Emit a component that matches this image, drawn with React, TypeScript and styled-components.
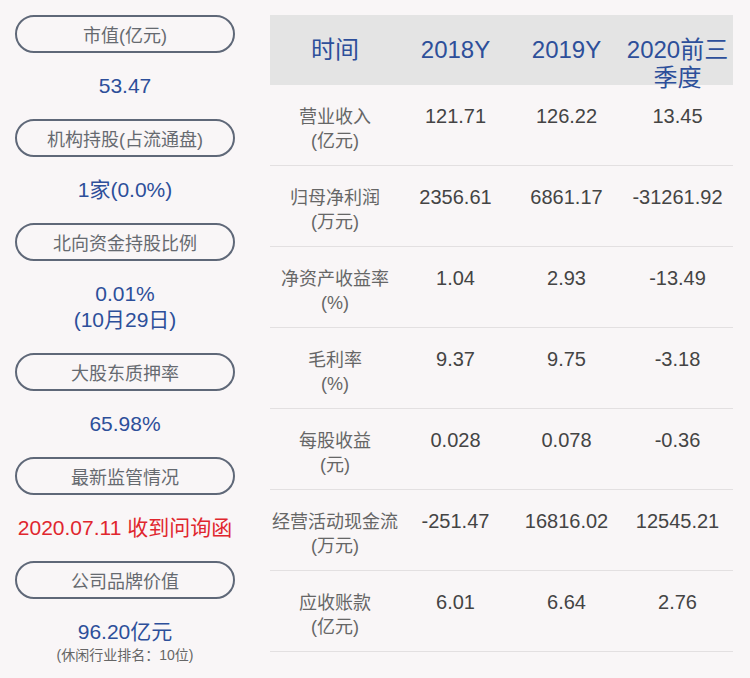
import React from "react";
import styled, { createGlobalStyle } from "styled-components";

const GlobalStyle = createGlobalStyle`
  html, body {
    margin: 0;
    padding: 0;
    background: #f9f6f7;
    font-family: "Liberation Sans", "Noto Sans CJK SC", sans-serif;
  }
`;

const Page = styled.div`
  width: 750px;
  height: 678px;
  box-sizing: border-box;
  padding: 15px 17px 0 15px;
  display: flex;
  gap: 35px;
  align-items: flex-start;
  background: #f9f6f7;
  overflow: hidden;
`;

const LeftColumn = styled.div`
  width: 220px;
  display: flex;
  flex-direction: column;
`;

const Pill = styled.div`
  height: 38px;
  box-sizing: border-box;
  border: 2px solid #5f6878;
  border-radius: 19px;
  display: flex;
  align-items: center;
  justify-content: center;
  font-size: 18px;
  color: #666a70;
`;

const ValueBlock = styled.div`
  padding: 20px 0;
  display: flex;
  flex-direction: column;
  align-items: center;
  text-align: center;
`;

const Value = styled.div<{ $red?: boolean }>`
  font-size: 21px;
  line-height: 26px;
  color: ${(p) => (p.$red ? "#e0262e" : "#2d4f9a")};
  white-space: nowrap;
`;

const SubText = styled.div`
  font-size: 14px;
  line-height: 18px;
  color: #666;
  margin-top: 1px;
`;

const Table = styled.div`
  width: 463px;
  display: flex;
  flex-direction: column;
`;

const HeaderRow = styled.div`
  display: grid;
  grid-template-columns: 130px 111px 111px 111px;
  height: 70px;
  background: #e4e4e4;
`;

const HeaderCell = styled.div`
  padding-top: 21px;
  font-size: 24px;
  line-height: 28px;
  color: #2d4f9a;
  text-align: center;
  white-space: normal;
  word-break: break-all;
  position: relative;
`;

const Row = styled.div`
  display: grid;
  grid-template-columns: 130px 111px 111px 111px;
  height: 81px;
  box-sizing: border-box;
  border-bottom: 1px solid #e3e0e1;
`;

const LabelCell = styled.div`
  padding-top: 20px;
  font-size: 18px;
  line-height: 24px;
  color: #666;
  text-align: center;
  white-space: nowrap;
`;

const NumCell = styled.div`
  padding-top: 19px;
  font-size: 20px;
  line-height: 24px;
  color: #444;
  text-align: center;
  white-space: nowrap;
`;

const leftItems: { title: string; values: string[]; red?: boolean; sub?: string }[] = [
  { title: "市值(亿元)", values: ["53.47"] },
  { title: "机构持股(占流通盘)", values: ["1家(0.0%)"] },
  { title: "北向资金持股比例", values: ["0.01%", "(10月29日)"] },
  { title: "大股东质押率", values: ["65.98%"] },
  { title: "最新监管情况", values: ["2020.07.11 收到问询函"], red: true },
  { title: "公司品牌价值", values: ["96.20亿元"], sub: "(休闲行业排名：10位)" },
];

const rows: { label: string[]; nums: string[] }[] = [
  { label: ["营业收入", "(亿元)"], nums: ["121.71", "126.22", "13.45"] },
  { label: ["归母净利润", "(万元)"], nums: ["2356.61", "6861.17", "-31261.92"] },
  { label: ["净资产收益率", "(%)"], nums: ["1.04", "2.93", "-13.49"] },
  { label: ["毛利率", "(%)"], nums: ["9.37", "9.75", "-3.18"] },
  { label: ["每股收益", "(元)"], nums: ["0.028", "0.078", "-0.36"] },
  { label: ["经营活动现金流", "(万元)"], nums: ["-251.47", "16816.02", "12545.21"] },
  { label: ["应收账款", "(亿元)"], nums: ["6.01", "6.64", "2.76"] },
];

export default function App() {
  return (
    <>
      <GlobalStyle />
      <Page>
        <LeftColumn>
          {leftItems.map((item) => (
            <React.Fragment key={item.title}>
              <Pill>{item.title}</Pill>
              <ValueBlock>
                {item.values.map((v) => (
                  <Value key={v} $red={item.red}>
                    {v}
                  </Value>
                ))}
                {item.sub && <SubText>{item.sub}</SubText>}
              </ValueBlock>
            </React.Fragment>
          ))}
        </LeftColumn>
        <Table>
          <HeaderRow>
            <HeaderCell>时间</HeaderCell>
            <HeaderCell>2018Y</HeaderCell>
            <HeaderCell>2019Y</HeaderCell>
            <HeaderCell>2020前三季度</HeaderCell>
          </HeaderRow>
          {rows.map((r) => (
            <Row key={r.label[0]}>
              <LabelCell>
                {r.label[0]}
                <br />
                {r.label[1]}
              </LabelCell>
              {r.nums.map((n, i) => (
                <NumCell key={i}>{n}</NumCell>
              ))}
            </Row>
          ))}
        </Table>
      </Page>
    </>
  );
}
